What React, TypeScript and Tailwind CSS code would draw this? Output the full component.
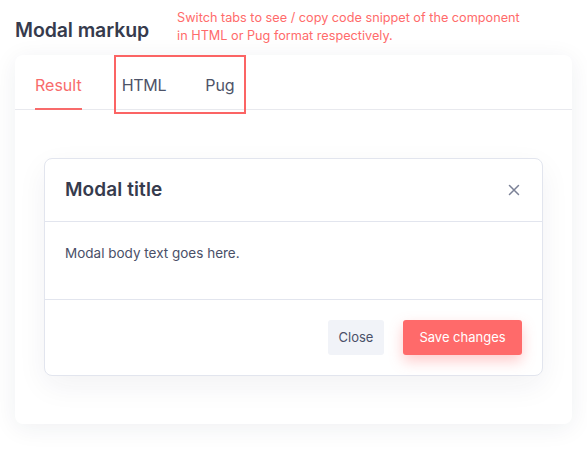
import React from "react";

export default function App() {
  return (
    <div className="min-h-[460px] bg-white px-[15px] pt-[9px] pb-8 text-[#3a3f51]" style={{ fontFamily: "Inter, 'Noto Sans', sans-serif" }}>
      <div className="flex items-start">
        <h1 className="mt-[7px] text-[19.5px] font-semibold leading-[28px] tracking-[-0.1px] text-[#363b4d]">Modal markup</h1>
        <p className="ml-[28px] text-[12.7px] leading-[18px] text-[#ff6b6b]">
          Switch tabs to see / copy code snippet of the component
          <br />
          in HTML or Pug format respectively.
        </p>
      </div>

      <div className="relative mt-[10px] rounded-[8px] bg-white shadow-[0_4px_24px_rgba(30,40,70,0.07)]">
        <div className="flex h-[55px] items-stretch border-b border-[#e8e9ee] px-[20px] pt-[5px]">
          <div className="relative flex items-center text-[16px] text-[#f86b6b]">
            Result
            <span className="absolute bottom-[-1px] left-0 right-0 h-[2px] bg-[#f86b6b]" />
          </div>
          <div className="ml-[40px] flex items-center text-[16px] tracking-[-0.3px] text-[#4d5368]">HTML</div>
          <div className="ml-[39px] flex items-center text-[16px] text-[#4d5368]">Pug</div>
        </div>
        <div className="pointer-events-none absolute left-[99px] top-0 h-[59px] w-[132px] border-2 border-[#fb6464]" />

        <div className="px-[29px] py-[48px]">
          <div className="rounded-[8px] border border-[#e2e5ee] bg-white shadow-[0_10px_30px_rgba(30,40,70,0.06)]">
            <div className="flex h-[63px] items-center justify-between border-b border-[#e2e5ee] px-[20px]">
              <h2 className="text-[19px] font-semibold tracking-[0.1px] text-[#363b4d]">Modal title</h2>
              <svg width="12" height="12" viewBox="0 0 12 12" className="mr-[2px]" fill="none" stroke="#7b8196" strokeWidth="1.5" strokeLinecap="round">
                <path d="M1.5 1.5 L10.5 10.5 M10.5 1.5 L1.5 10.5" />
              </svg>
            </div>
            <div className="h-[78px] border-b border-[#e2e5ee] px-[20px] pt-[21px]">
              <p className="text-[13.5px] leading-[20px] text-[#4a5068]">Modal body text goes here.</p>
            </div>
            <div className="flex h-[75px] items-center justify-end gap-[19px] px-[20px]">
              <button className="h-[35px] w-[56px] rounded-[3px] bg-[#f1f3f8] text-[13px] text-[#4a5068]">Close</button>
              <button className="h-[35px] w-[119px] rounded-[3px] bg-[#ff6a6a] text-[13px] text-white shadow-[0_6px_14px_rgba(255,106,106,0.35)]">Save changes</button>
            </div>
          </div>
        </div>
      </div>
    </div>
  );
}
